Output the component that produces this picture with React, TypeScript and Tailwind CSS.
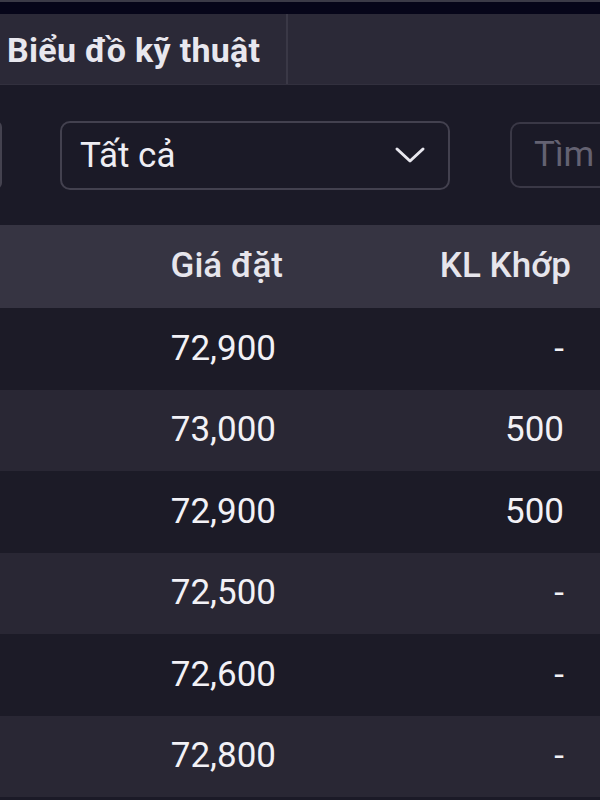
import React from "react";

const rows = [
  { p: "72,900", k: "-" },
  { p: "73,000", k: "500" },
  { p: "72,900", k: "500" },
  { p: "72,500", k: "-" },
  { p: "72,600", k: "-" },
  { p: "72,800", k: "-" },
];

export default function App() {
  return (
    <div
      className="w-[600px] h-[800px] overflow-hidden bg-[#1b1a27] text-[#f2f1f6]"
      style={{ fontFamily: "Roboto, 'Noto Sans', sans-serif" }}
    >
      <div className="h-[2px] bg-[#3b3a47]" />
      <div className="h-[12px] bg-[#060519]" />
      <div className="h-[71px] bg-[#2b2937] flex border-b border-[#32303e]">
        <div className="h-full flex items-center pl-[7px] pr-[26px] border-r-2 border-[#3a3846]">
          <span className="text-[34px] font-bold tracking-[0.3px] text-[#e8e7ee] leading-none pt-[2px]">Biểu đồ kỹ thuật</span>
        </div>
      </div>
      <div className="h-[140px] flex items-center relative">
        <div className="absolute left-[-10px] top-[36px] w-[12px] h-[68px] border-2 border-[#44424f] rounded-[8px]" />
        <div className="ml-[60px] w-[390px] h-[69px] shrink-0 border-2 border-[#43414f] rounded-[10px] flex items-center justify-between pl-[18px] pr-[22px]">
          <span className="text-[35px] text-[#eeedf3] pt-[2px]">Tất cả</span>
          <svg width="32" height="20" viewBox="0 0 32 20" fill="none">
            <path d="M3 4 L16 16 L29 4" stroke="#e8e7ee" strokeWidth="3" strokeLinecap="round" strokeLinejoin="round" />
          </svg>
        </div>
        <div className="ml-[60px] w-[200px] h-[66px] border-2 border-[#3a3846] rounded-[10px] flex items-center pl-[22px] shrink-0">
          <span className="text-[35px] text-[#646272]">Tìm</span>
        </div>
      </div>
      <div className="h-[83px] bg-[#363442] flex items-center text-[35px] font-medium text-[#e6e5ec]">
        <div className="w-[283px] text-right">Giá đặt</div>
        <div className="w-[288px] text-right">KL Khớp</div>
      </div>
      {rows.map((r, i) => (
        <div
          key={i}
          className={`h-[81.5px] flex items-center text-[35px] ${i % 2 === 0 ? "bg-[#1c1b27]" : "bg-[#292734]"}`}
        >
          <div className="w-[276px] text-right">{r.p}</div>
          <div className="w-[288px] text-right">{r.k}</div>
        </div>
      ))}
    </div>
  );
}
